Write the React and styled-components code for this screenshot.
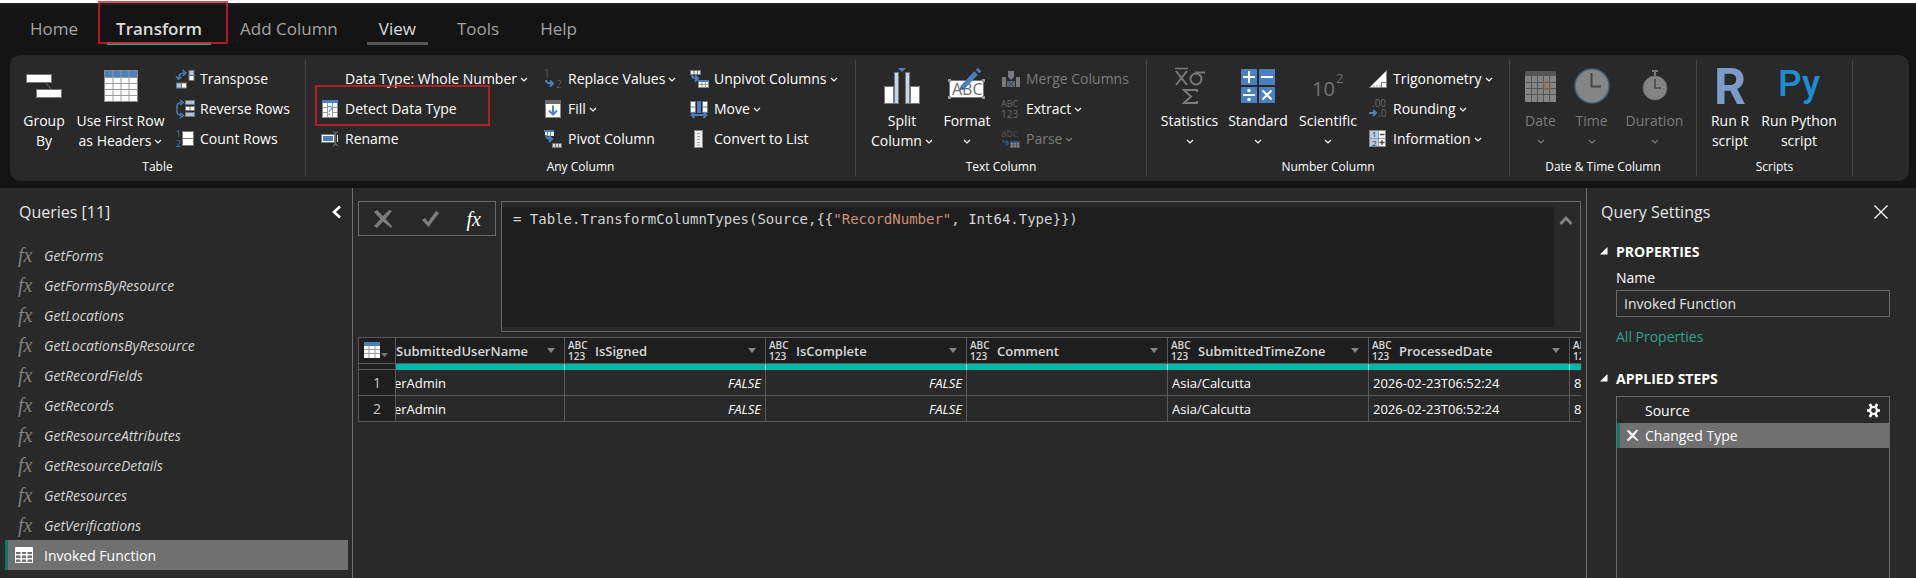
//react
import { useState } from "react";

//styled-components
import styled, { createGlobalStyle } from "styled-components";

const GlobalStyle = createGlobalStyle`
  * {
    box-sizing: border-box;
  }
  body {
    margin: 0;
    background-color: #141414;
    color: #ffffff;
    font-family: "Open Sans", "Noto Sans", sans-serif;
    font-size: 14px;
  }
  button, input {
    font: inherit;
    color: inherit;
  }
  button {
    background: none;
    border: none;
    padding: 0;
    cursor: pointer;
  }
  svg {
    flex: none;
    overflow: visible;
  }
`;

//layout
const Container = styled.div`
  display: flex;
  flex-direction: column;
  min-height: 100vh;
  border-top: 3px solid #ffffff;
`;

const Tabs = styled.nav`
  display: flex;
  gap: 17px;
  padding: 0 18px 10px;
  border-top: 2px solid #222222;
`;

const Tab = styled.button`
  position: relative;
  height: 40px;
  padding: ${(props) => (props.$active ? "10px 9px 0" : "10px 12px 0")};
  border-bottom: 3px solid ${(props) => props.$line || "transparent"};
  font-size: 17px;
  font-weight: ${(props) => (props.$active ? "600" : "400")};
  color: ${(props) => (props.$line ? "#dcdcdc" : "#a3a3a3")};
`;

//red frames over the tab and the detect button
const Frame = styled.span`
  position: absolute;
  border: 2px solid rgba(214, 30, 34, 0.8);
  pointer-events: none;
`;

const TabFrame = styled(Frame)`
  inset: -4px -17px -2px -9px;
`;

const ButtonFrame = styled(Frame)`
  inset: -14px -33px -7px -5px;
`;

const Ribbon = styled.div`
  display: flex;
  margin: 0 7px 7px 10px;
  padding: 5px 0;
  border-radius: 10px;
  background-color: #292929;
`;

const Group = styled.section`
  display: flex;
  flex-direction: column;
  flex: 0 0 ${(props) => props.$width};
  padding-top: 4px;
  border-right: 1px solid #444444;
`;

const GroupBody = styled.div`
  display: flex;
  height: 90px;
  padding-left: ${(props) => props.$left || "6px"};
`;

const GroupTitle = styled.div`
  padding-top: 4px;
  line-height: 18px;
  font-size: 12px;
  text-align: center;
`;

const LargeButton = styled.button`
  display: flex;
  flex-direction: column;
  align-items: center;
  flex: 0 0 ${(props) => props.$width};
  line-height: 20px;
  white-space: nowrap;
  color: ${(props) => (props.disabled ? "#7c7c7c" : "#ffffff")};
`;

const LargeIcon = styled.span`
  display: flex;
  align-items: center;
  height: 44px;
  margin-bottom: 3px;
`;

const Line = styled.span`
  display: flex;
  align-items: center;
  gap: 3px;
  height: 20px;
`;

const SmallColumn = styled.div`
  display: flex;
  flex-direction: column;
  align-items: flex-start;
  margin-left: ${(props) => props.$left || "0"};
  width: ${(props) => props.$width || "auto"};
`;

const SmallButton = styled.button`
  position: relative;
  display: flex;
  align-items: center;
  gap: 5px;
  height: 20px;
  margin: 5px 0;
  line-height: 20px;
  white-space: nowrap;
  color: ${(props) => (props.disabled ? "#7c7c7c" : "#ffffff")};
`;

const SmallIcon = styled.span`
  display: flex;
  width: 20px;
  height: 20px;
`;

const Body = styled.div`
  display: flex;
  flex: 1;
  background-color: #292929;
`;

//queries
const Queries = styled.aside`
  flex: 0 0 353px;
  border-right: 1px solid #6f6f6f;
`;

const PanelTop = styled.div`
  display: flex;
  align-items: center;
  justify-content: space-between;
  height: 48px;
  padding: ${(props) => props.$padding};
`;

const PanelTitle = styled.h2`
  margin: 0;
  font-size: 16px;
  font-weight: 400;
  color: #e6e6e6;
`;

const IconButton = styled.button`
  display: flex;
`;

const QueryList = styled.ul`
  margin: 0;
  padding: 4px 4px 0 5px;
  list-style: none;
`;

const Query = styled.button`
  display: flex;
  align-items: center;
  width: 100%;
  height: 30px;
  border-left: 3px solid ${(props) => (props.$selected ? "#117865" : "transparent")};
  background-color: ${(props) => (props.$selected ? "#707070" : "transparent")};
  color: ${(props) => (props.$selected ? "#ffffff" : "#d6d6d6")};
  font-style: ${(props) => (props.$selected ? "normal" : "italic")};
`;

const QueryIcon = styled.span`
  display: flex;
  flex: 0 0 36px;
  padding-left: ${(props) => (props.$selected ? "6px" : "10px")};
`;

const Fx = styled.span`
  font-family: "Liberation Serif", serif;
  font-style: italic;
  font-size: 20px;
  line-height: 20px;
  color: ${(props) => props.$color || "#808080"};
`;

//center
const Center = styled.main`
  flex: 1;
  min-width: 0;
  padding: 13px 5px 0;
`;

const FormulaRow = styled.div`
  display: flex;
  align-items: flex-start;
  gap: 5px;
`;

const FormulaButtons = styled.div`
  display: flex;
  align-items: center;
  justify-content: space-between;
  width: 138px;
  height: 35px;
  padding: 0 14px;
  border: 1px solid #6a6a6a;
`;

const FormulaBox = styled.div`
  display: flex;
  flex: 1;
  align-items: flex-start;
  height: 131px;
  padding: 5px 0 4px;
  border: 1px solid #6a6a6a;
`;

const Formula = styled.div`
  flex: 1;
  align-self: stretch;
  padding: 2px 11px;
  background-color: #1e1e1e;
  color: #d4d4d4;
  font-family: "DejaVu Sans Mono", "Liberation Mono", monospace;
  font-size: 14px;
  line-height: 20px;
`;

const FormulaString = styled.span`
  color: #ce9178;
`;

const FormulaToggle = styled(IconButton)`
  padding: 7px 7px 0 5px;
`;

const Grid = styled.div`
  margin-top: 5px;
  overflow: hidden;
`;

const Table = styled.table`
  width: 1413px;
  table-layout: fixed;
  border-collapse: separate;
  border-spacing: 0;
  border-left: 1px solid #5a5a5a;
  font-size: 13px;
`;

const HeadCell = styled.th`
  height: 27px;
  padding: 0;
  overflow: hidden;
  border-top: 1px solid #5a5a5a;
  border-right: 1px solid #5a5a5a;
  border-bottom: 1px solid #5a5a5a;
  background-color: #1e1e1e;
  color: #d8d8d8;
  font-weight: 600;
`;

const HeadContent = styled.div`
  display: flex;
  align-items: center;
  justify-content: space-between;
  gap: 7px;
  padding: ${(props) => (props.$clipped ? "0 8px 0 0" : "0 8px 0 3px")};
`;

const HeadName = styled.span`
  flex: 1;
  text-align: left;
`;

const TypeTag = styled.span`
  flex: 0 0 20px;
  font-size: 10px;
  line-height: 11px;
  text-align: left;
`;

const QualityCell = styled.td`
  height: 6px;
  padding: 0;
  border-right: 1px solid ${(props) => (props.$empty ? "#5a5a5a" : "#8fd8d2")};
  border-bottom: ${(props) => (props.$empty ? "1px solid #5a5a5a" : "none")};
  background-color: ${(props) => (props.$empty ? "#1e1e1e" : "#01b8aa")};
`;

const Cell = styled.td`
  height: 26px;
  padding: ${(props) => (props.$clipped ? "0" : "0 4px")};
  border-right: 1px solid #5a5a5a;
  border-bottom: 1px solid #5a5a5a;
  overflow: hidden;
  white-space: nowrap;
  text-align: ${(props) => (props.$logical ? "right" : "left")};
  text-indent: ${(props) => (props.$clipped ? "-2px" : "0")};
  font-style: ${(props) => (props.$logical ? "italic" : "normal")};
`;

const RowNumber = styled.th`
  padding: 0;
  border-right: 1px solid #5a5a5a;
  border-bottom: 1px solid #5a5a5a;
  background-color: #1e1e1e;
  color: #c8c8c8;
  font-size: 14px;
  font-weight: 400;
`;

//settings
const Settings = styled.aside`
  display: flex;
  flex-direction: column;
  flex: 0 0 330px;
  border-left: 1px solid #6f6f6f;
`;

const SectionTitle = styled.h3`
  display: flex;
  align-items: center;
  gap: 8px;
  height: 24px;
  margin: ${(props) => props.$margin || "0"};
  padding-left: 13px;
  font-size: 14px;
  font-weight: 700;
`;

const Fields = styled.div`
  display: flex;
  flex-direction: column;
  padding: 3px 26px 0 29px;
`;

const Label = styled.label`
  line-height: 24px;
`;

const Input = styled.input`
  height: 27px;
  padding: 0 7px;
  border: 1px solid #6a6a6a;
  background-color: transparent;
  color: #e6e6e6;
`;

const Link = styled.a`
  margin-top: 8px;
  line-height: 24px;
  color: #2ba58a;
  text-decoration: none;
`;

const Steps = styled.ul`
  flex: 1;
  margin: 6px 26px 0 29px;
  padding: 1px 0 0;
  border: 1px solid #6a6a6a;
  border-bottom: none;
  list-style: none;
`;

const Step = styled.li`
  display: flex;
  align-items: center;
  justify-content: space-between;
  height: 25px;
  padding-right: 8px;
  border-left: 3px solid ${(props) => (props.$selected ? "#117865" : "transparent")};
  background-color: ${(props) => (props.$selected ? "#707070" : "transparent")};
`;

const StepName = styled.button`
  display: flex;
  align-items: center;
`;

const StepIcon = styled.span`
  display: flex;
  flex: 0 0 25px;
  padding-left: 6px;
`;

//icons
const Svg = ({ w = 20, h = 20, children }) => (
  <svg width={w} height={h} viewBox={`0 0 ${w} ${h}`} fill="none" aria-hidden="true">
    {children}
  </svg>
);

const Chevron = () => (
  <Svg w={8} h={6}>
    <path d="M1 2 L4 5 L7 2" stroke="currentColor" strokeWidth="1.2" />
  </Svg>
);

const BLUE = "#4a80bd";

const GroupIcon = () => (
  <Svg w={36} h={26}>
    <path d="M19 9 L25 16" stroke="#6a6a6a" />
    <rect x="0.5" y="1.5" width="25" height="8" fill="#fff" stroke="#777" />
    <rect x="10.5" y="16.5" width="25" height="8" fill="#fff" stroke="#777" />
  </Svg>
);

const HeadersIcon = () => (
  <Svg w={34} h={32}>
    <rect x="0.5" y="0.5" width="33" height="31" fill="#fff" stroke="#8a8a8a" />
    <rect x="1" y="1" width="32" height="6" fill={BLUE} />
    <path d="M1 7.5H33M1 13.5H33M1 19.5H33M1 25.5H33M9 1V31M17 1V31M25 1V31" stroke="#9b9b9b" />
  </Svg>
);

const TransposeIcon = () => (
  <Svg>
    <path d="M3.5 9.5 Q4 4 9 4" stroke={BLUE} strokeWidth="1.6" />
    <path d="M7.5 1 L11 4 L7.5 7 M1 7.5 L3.5 10.5 L6.5 8" stroke={BLUE} strokeWidth="1.5" />
    <rect x="14" y="1.5" width="5" height="5" fill="#a9c3e2" stroke="#777" />
    <rect x="14" y="6.5" width="5" height="5" fill="#fff" stroke="#777" />
    <rect x="1.5" y="14" width="5" height="5" fill="#a9c3e2" stroke="#777" />
    <rect x="6.5" y="14" width="5" height="5" fill="#fff" stroke="#777" />
  </Svg>
);

const ReverseIcon = () => (
  <Svg>
    <path d="M6.5 3.5 Q2 4 2 7 V13 Q2 16 6.5 16.5" stroke={BLUE} strokeWidth="1.4" />
    <path d="M5 1 L8.5 3.5 L5 6 M5 14 L8.5 16.5 L5 19" stroke={BLUE} strokeWidth="1.4" />
    <rect x="10.5" y="1.5" width="9" height="4" fill="#a9c3e2" stroke="#777" />
    <rect x="10.5" y="7.5" width="9" height="4" fill="#fff" stroke="#777" />
    <rect x="10.5" y="13.5" width="9" height="4" fill="#a9c3e2" stroke="#777" />
    <path d="M15 7.5V11.5" stroke="#777" />
  </Svg>
);

const CountIcon = () => (
  <Svg>
    <text x="1" y="8" fontSize="9" fill={BLUE}>1</text>
    <text x="1" y="18" fontSize="9" fill={BLUE}>2</text>
    <rect x="7.5" y="2.5" width="11" height="7" fill="#fff" stroke="#777" />
    <rect x="7.5" y="9.5" width="11" height="7" fill="#fff" stroke="#777" />
  </Svg>
);

const DetectIcon = () => (
  <Svg>
    <rect x="2.5" y="1.5" width="15" height="17" fill="#fff" stroke="#8a8a8a" />
    <rect x="2" y="1" width="16" height="3" fill={BLUE} />
    <path d="M2.5 8.5H17.5M2.5 13.5H17.5M7.5 4V18.5M12.5 4V18.5" stroke="#9b9b9b" />
    <rect x="8" y="6" width="4" height="11" fill="#fff" />
    <text x="7" y="16" fontSize="12" fill={BLUE}>?</text>
  </Svg>
);

const RenameIcon = () => (
  <Svg>
    <rect x="1.5" y="5.5" width="13" height="8" fill="#fff" stroke="#777" />
    <rect x="3" y="7" width="10" height="5" fill={BLUE} />
    <path d="M13 2.5 L15.5 4 L18 2.5 M15.5 4 V15 M13 17 L15.5 15 L18 17" stroke="#666" strokeWidth="1.4" />
    <path d="M17.5 6 V13" stroke="#ddd" />
  </Svg>
);

const ReplaceIcon = () => (
  <Svg>
    <text x="1" y="8" fontSize="10" fill="#5c5c5c">1</text>
    <text x="13" y="19" fontSize="10" fill="#5c5c5c">2</text>
    <path d="M3 11 Q3 14.5 9 14.5 M7 11.5 L10 14.5 L7 17.5" stroke={BLUE} strokeWidth="2" />
  </Svg>
);

const FillIcon = () => (
  <Svg>
    <rect x="2.5" y="1.5" width="15" height="17" fill="#fff" stroke="#888" />
    <rect x="2" y="1" width="16" height="4" fill="#6a6a6a" />
    <path d="M10 6.5 V15 M6 11.5 L10 15.5 L14 11.5" stroke={BLUE} strokeWidth="2" />
  </Svg>
);

const PivotIcon = () => (
  <Svg>
    <rect x="1" y="1" width="10" height="2" fill={BLUE} />
    <rect x="2" y="3" width="9" height="4" fill="#eee" />
    <path d="M4.5 3V7M7.5 3V7" stroke="#888" />
    <path d="M3 6 Q3 10 8 10 M6 7 L9 10 L6 13" stroke={BLUE} strokeWidth="2" />
    <rect x="9.5" y="14.5" width="9" height="4" fill="#ddd" stroke="#777" />
    <path d="M12.5 14V19M15.5 14V19" stroke="#777" />
  </Svg>
);

const UnpivotIcon = () => (
  <Svg>
    <rect x="1.5" y="1.5" width="10" height="4" fill="#eee" stroke="#777" />
    <path d="M5 1V6M8.5 1V6" stroke="#777" />
    <path d="M3 6 Q3 9.5 8 9.5 M6 6.5 L9 9.5 L6 12.5" stroke={BLUE} strokeWidth="2" />
    <rect x="9.5" y="11.5" width="10" height="7" fill="#fff" stroke="#888" />
    <rect x="9" y="11" width="11" height="2" fill={BLUE} />
    <path d="M9 15.5H20M13 13V19M16.5 13V19" stroke="#999" />
  </Svg>
);

const MoveIcon = () => (
  <Svg>
    <rect x="1.5" y="2.5" width="5" height="11" fill="#fff" stroke="#777" />
    <rect x="13.5" y="2.5" width="5" height="11" fill="#fff" stroke="#777" />
    <path d="M1 8H7M13 8H19" stroke="#777" />
    <rect x="8" y="2" width="4" height="12" fill={BLUE} />
    <path d="M3 16 H17 M5.5 13 L2.5 16 L5.5 19 M14.5 13 L17.5 16 L14.5 19" stroke={BLUE} strokeWidth="1.8" />
  </Svg>
);

const ListIcon = () => (
  <Svg>
    <rect x="5.5" y="1.5" width="8" height="17" fill="#eee" stroke="#888" />
    <path d="M8 4.5H11M8 7.5H11M8 10.5H11M8 13.5H11M8 16H11" stroke="#aaa" />
  </Svg>
);

const SplitIcon = () => (
  <Svg w={38} h={38}>
    <path d="M15 1 H23 L19 5 Z" fill={BLUE} />
    <rect x="1.5" y="19.5" width="9" height="17" fill="#fff" stroke="#777" />
    <rect x="27.5" y="19.5" width="9" height="17" fill="#fff" stroke="#777" />
    <rect x="11.5" y="5.5" width="4" height="31" fill="#c3d5ec" stroke="#777" />
    <rect x="22.5" y="5.5" width="4" height="31" fill="#c3d5ec" stroke="#777" />
  </Svg>
);

const FormatIcon = () => (
  <Svg w={38} h={38}>
    <rect x="1.5" y="13.5" width="34" height="17" fill="#fff" stroke="#777" />
    <path d="M0 12H3V15H0ZM34 12H37V15H34ZM0 29H3V32H0ZM34 29H37V32H34Z" fill="#999" />
    <text x="4" y="28" fontSize="16" fill="#6d6d6d">ABC</text>
    <path d="M15 20 L28 6" stroke={BLUE} strokeWidth="5" />
    <path d="M29.5 4.5 L31.5 2.5" stroke={BLUE} strokeWidth="5" />
    <path d="M13 18 L17 22 L11.5 23.5 Z" fill="#3767a0" />
  </Svg>
);

const MergeIcon = () => (
  <Svg>
    <rect x="1" y="8" width="4" height="10" fill="#7a7a7a" />
    <rect x="15" y="8" width="4" height="10" fill="#7a7a7a" />
    <path d="M7 2H13V8L10 11L7 8Z" fill="#777b80" />
    <rect x="6" y="12" width="8" height="6" fill="#62686f" />
    <path d="M7 12L10 15L7 18M13 12L10 15L13 18" stroke="#2d4d72" />
  </Svg>
);

const ExtractIcon = () => (
  <Svg>
    <text x="0" y="8" fontSize="9" fill="#6a6a6a">ABC</text>
    <text x="0" y="19" fontSize="10" fill="#6a6a6a">123</text>
  </Svg>
);

const ParseIcon = () => (
  <Svg>
    <text x="0" y="8" fontSize="10" fill="#525252">abc</text>
    <path d="M2 11 Q2 14 7 14 M5 11.5 L7.5 14 L5 16.5" stroke="#2f5580" strokeWidth="1.6" />
    <rect x="9.5" y="12.5" width="9" height="6" fill="#8a8a8a" stroke="#555" />
    <rect x="9" y="12" width="10" height="2" fill="#2f5580" />
    <path d="M12.5 13V19M15.5 13V19M9 16H19" stroke="#555" />
  </Svg>
);

const StatisticsIcon = () => (
  <Svg w={34} h={38}>
    <path d="M2 1.5H15" stroke="#7a7a7a" strokeWidth="1.5" />
    <path d="M3 4L14 18M14 4L3 18" stroke="#7a7a7a" strokeWidth="2" />
    <circle cx="23" cy="12" r="5.500" stroke="#7a7a7a" strokeWidth="2" />
    <path d="M22 5.500H32" stroke="#7a7a7a" strokeWidth="2" />
    <path d="M24 25V23H11L18 29.500L11 36H24V34" stroke="#7a7a7a" strokeWidth="2" />
  </Svg>
);

const StandardIcon = () => (
  <Svg w={36} h={36}>
    <path d="M1 1H17V17H1ZM19 1H35V17H19ZM1 19H17V35H1ZM19 19H35V35H19Z" fill={BLUE} />
    <path d="M3 9H15M9 3V15M21 9H33M3 27H15M22.5 22.5L31.5 31.5M31.5 22.5L22.5 31.5" stroke="#fff" strokeWidth="2" />
    <circle cx="9" cy="22.5" r="1.7" fill="#fff" />
    <circle cx="9" cy="31.5" r="1.7" fill="#fff" />
  </Svg>
);

const ScientificIcon = () => (
  <Svg w={34} h={38}>
    <text x="1" y="29" fontSize="20" fill="#737373">10</text>
    <text x="25" y="16" fontSize="13" fill="#737373">2</text>
  </Svg>
);

const TrigIcon = () => (
  <Svg>
    <path d="M1.5 18.5 L18.5 1.5 V18.5 Z" fill="#fff" stroke="#888" />
    <path d="M13.5 18.5V13.5H18.5" stroke="#777" />
    <path d="M6 18V16M9 18V16M12 18V16" stroke="#999" />
  </Svg>
);

const RoundingIcon = () => (
  <Svg>
    <text x="4" y="8" fontSize="10" fill="#6a6a6a">.00</text>
    <text x="10" y="18" fontSize="10" fill="#6a6a6a">.0</text>
    <path d="M1 14H7M5 11L8 14L5 17" stroke={BLUE} strokeWidth="2" />
  </Svg>
);

const InformationIcon = () => (
  <Svg>
    <rect x="1.5" y="1.5" width="16" height="16" fill="#fff" stroke="#888" />
    <rect x="2" y="2" width="8" height="15" fill="#b5cbe6" />
    <path d="M2 9.5H17M10.5 2V17" stroke="#999" />
    <text x="4" y="8" fontSize="8" fill="#333">1</text>
    <text x="4" y="17" fontSize="8" fill="#333">2</text>
    <path d="M12 5.5H16.5M11.5 13.5H16.5M14 11V16" stroke="#444" strokeWidth="1.3" />
  </Svg>
);

const DateIcon = () => (
  <Svg w={34} h={34}>
    <rect x="1" y="2" width="31" height="31" fill="#858585" />
    <rect x="1" y="2" width="31" height="5" fill="#555" />
    <path d="M2 13.5H32M2 19.5H32M2 25.5H32M7.5 7V33M13.5 7V33M19.5 7V33M25.5 7V33" stroke="#555" />
    <rect x="20" y="13" width="6" height="7" stroke="#9a6240" />
  </Svg>
);

const TimeIcon = () => (
  <Svg w={38} h={38}>
    <circle cx="19" cy="19" r="17" fill="#858585" stroke="#47617c" strokeWidth="1.5" />
    <path d="M18.5 6V19.5H28" stroke="#454545" strokeWidth="2" />
  </Svg>
);

const DurationIcon = () => (
  <Svg w={28} h={32}>
    <rect x="11" y="0" width="6" height="2" fill="#777" />
    <path d="M14 1V6" stroke="#777" strokeWidth="2" />
    <circle cx="14" cy="18" r="12" fill="#858585" stroke="#666" />
    <circle cx="14" cy="18" r="9" stroke="#555" strokeDasharray="1 3.7" />
    <path d="M14 9V18H20" stroke="#454545" strokeWidth="1.5" />
  </Svg>
);

const RIcon = () => (
  <Svg w={32} h={44}>
    <text x="0" y="40" fontSize="50" fontWeight="700" fontFamily="Roboto" fill="#7b9cc9">R</text>
  </Svg>
);

const PythonIcon = () => (
  <Svg w={42} h={44}>
    <text x="0" y="32" fontSize="37" fontWeight="500" fontFamily="Roboto" fill="#1f8dd2">Py</text>
  </Svg>
);

const TableIcon = () => (
  <Svg w={20} h={18}>
    <rect x="1" y="1" width="18" height="16" fill="#fff" />
    <path d="M2 6H6.5V8H2ZM8 6H12V8H8ZM13.5 6H18V8H13.5ZM2 9.5H6.5V12H2ZM8 9.5H12V12H8ZM13.5 9.5H18V12H13.5ZM2 13.5H6.5V16H2ZM8 13.5H12V16H8ZM13.5 13.5H18V16H13.5Z" fill="#707070" />
  </Svg>
);

const CornerIcon = () => (
  <Svg w={26} h={18}>
    <rect x="2" y="1" width="16" height="15" fill="#fff" />
    <rect x="2" y="0" width="16" height="4" fill={BLUE} />
    <path d="M2 7.5H18M2 11.5H18M7 4V16M13 4V16" stroke="#999" />
    <path d="M19 11H26L22.5 15Z" fill="#777" />
  </Svg>
);

const DropIcon = () => (
  <Svg w={10} h={5}>
    <path d="M1 0H9L5 5Z" fill="#858585" />
  </Svg>
);

const CrossIcon = ({ size, color }) => (
  <svg width={size} height={size} viewBox="0 0 20 20" fill={color} aria-hidden="true">
    <path d="M1 3 L4 1 L10 7 L16 1 L19 2 L12.5 10 L19 17 L18 19 L10 12.5 L4 19 L1 17 L7.5 10 Z" />
  </svg>
);

const CheckIcon = () => (
  <Svg w={18} h={18}>
    <path d="M1 10 L4 8 L7 12 L15 1 L18 3 L7.5 17 Z" fill="#7c7c7c" />
  </Svg>
);

const GearIcon = () => (
  <Svg w={15} h={15}>
    <circle cx="7.5" cy="7.5" r="3.5" stroke="#fff" strokeWidth="2.2" />
    <path d="M1 7.5H4M11 7.5H14M3.800 1L5.500 4M9.500 11L11.200 14M3.800 14L5.500 11M9.500 4L11.200 1" stroke="#fff" strokeWidth="2.6" />
  </Svg>
);

const Triangle = () => (
  <Svg w={8} h={8}>
    <path d="M0 7.5 L7.5 0 V7.5 Z" fill="#fff" />
  </Svg>
);

const Small = ({ icon, text, menu, children, ...rest }) => (
  <SmallButton {...rest}>
    <SmallIcon>{icon}</SmallIcon>
    <Line>
      {text}
      {menu && <Chevron />}
    </Line>
    {children}
  </SmallButton>
);

const Large = ({ icon, text, second, menu, width, disabled }) => (
  <LargeButton $width={width} disabled={disabled}>
    <LargeIcon>{icon}</LargeIcon>
    <Line>{text}</Line>
    <Line>
      {second}
      {menu && <Chevron />}
    </Line>
  </LargeButton>
);

const queries = [
  "GetForms",
  "GetFormsByResource",
  "GetLocations",
  "GetLocationsByResource",
  "GetRecordFields",
  "GetRecords",
  "GetResourceAttributes",
  "GetResourceDetails",
  "GetResources",
  "GetVerifications",
  "Invoked Function",
];

const columns = ["IsSigned", "IsComplete", "Comment", "SubmittedTimeZone", "ProcessedDate", ""];

const rows = [1, 2];

const App = () => {
  const [selected, setSelected] = useState("Invoked Function");
  const [name, setName] = useState("Invoked Function");

  return (
    <Container>
      <GlobalStyle />
      <Tabs>
        <Tab>Home</Tab>
        <Tab $active $line="#2ba58a">
          Transform
          <TabFrame />
        </Tab>
        <Tab>Add Column</Tab>
        <Tab $line="#555555">View</Tab>
        <Tab>Tools</Tab>
        <Tab>Help</Tab>
      </Tabs>

      <Ribbon>
        <Group $width="296px">
          <GroupBody>
            <Large width="56px" icon={<GroupIcon />} text="Group" second="By" />
            <Large width="97px" icon={<HeadersIcon />} text="Use First Row" second="as Headers" menu />
            <SmallColumn $left="6px">
              <Small icon={<TransposeIcon />} text="Transpose" />
              <Small icon={<ReverseIcon />} text="Reverse Rows" />
              <Small icon={<CountIcon />} text="Count Rows" />
            </SmallColumn>
          </GroupBody>
          <GroupTitle>Table</GroupTitle>
        </Group>

        <Group $width="550px">
          <GroupBody $left="14px">
            <SmallColumn $width="223px">
              <Small text="Data Type: Whole Number" menu />
              <Small icon={<DetectIcon />} text="Detect Data Type">
                <ButtonFrame />
              </Small>
              <Small icon={<RenameIcon />} text="Rename" />
            </SmallColumn>
            <SmallColumn $width="146px">
              <Small icon={<ReplaceIcon />} text="Replace Values" menu />
              <Small icon={<FillIcon />} text="Fill" menu />
              <Small icon={<PivotIcon />} text="Pivot Column" />
            </SmallColumn>
            <SmallColumn>
              <Small icon={<UnpivotIcon />} text="Unpivot Columns" menu />
              <Small icon={<MoveIcon />} text="Move" menu />
              <Small icon={<ListIcon />} text="Convert to List" />
            </SmallColumn>
          </GroupBody>
          <GroupTitle>Any Column</GroupTitle>
        </Group>

        <Group $width="291px">
          <GroupBody>
            <Large width="80px" icon={<SplitIcon />} text="Split" second="Column" menu />
            <Large width="50px" icon={<FormatIcon />} text="Format" menu />
            <SmallColumn $left="9px">
              <Small icon={<MergeIcon />} text="Merge Columns" disabled />
              <Small icon={<ExtractIcon />} text="Extract" menu />
              <Small icon={<ParseIcon />} text="Parse" menu disabled />
            </SmallColumn>
          </GroupBody>
          <GroupTitle>Text Column</GroupTitle>
        </Group>

        <Group $width="363px">
          <GroupBody $left="8px">
            <Large width="69px" icon={<StatisticsIcon />} text="Statistics" menu />
            <Large width="68px" icon={<StandardIcon />} text="Standard" menu />
            <Large width="72px" icon={<ScientificIcon />} text="Scientific" menu />
            <SmallColumn $left="4px">
              <Small icon={<TrigIcon />} text="Trigonometry" menu />
              <Small icon={<RoundingIcon />} text="Rounding" menu />
              <Small icon={<InformationIcon />} text="Information" menu />
            </SmallColumn>
          </GroupBody>
          <GroupTitle>Number Column</GroupTitle>
        </Group>

        <Group $width="187px">
          <GroupBody>
            <Large width="49px" icon={<DateIcon />} text="Date" menu disabled />
            <Large width="53px" icon={<TimeIcon />} text="Time" menu disabled />
            <Large width="73px" icon={<DurationIcon />} text="Duration" menu disabled />
          </GroupBody>
          <GroupTitle>Date & Time Column</GroupTitle>
        </Group>

        <Group $width="156px">
          <GroupBody $left="8px">
            <Large width="50px" icon={<RIcon />} text="Run R" second="script" />
            <Large width="88px" icon={<PythonIcon />} text="Run Python" second="script" />
          </GroupBody>
          <GroupTitle>Scripts</GroupTitle>
        </Group>
      </Ribbon>

      <Body>
        <Queries>
          <PanelTop $padding="0 10px 0 19px">
            <PanelTitle>Queries [11]</PanelTitle>
            <IconButton aria-label="Collapse">
              <Svg w={11} h={14}>
                <path d="M9 1.5 L3 7 L9 12.5" stroke="#fff" strokeWidth="2.6" />
              </Svg>
            </IconButton>
          </PanelTop>
          <QueryList>
            {queries.map((query) => (
              <li key={query}>
                <Query $selected={query === selected} onClick={() => setSelected(query)}>
                  <QueryIcon $selected={query === "Invoked Function"}>
                    {query === "Invoked Function" ? <TableIcon /> : <Fx>fx</Fx>}
                  </QueryIcon>
                  {query}
                </Query>
              </li>
            ))}
          </QueryList>
        </Queries>

        <Center>
          <FormulaRow>
            <FormulaButtons>
              <IconButton aria-label="Cancel">
                <CrossIcon size={20} color="#7c7c7c" />
              </IconButton>
              <IconButton aria-label="Commit">
                <CheckIcon />
              </IconButton>
              <IconButton>
                <Fx $color="#ffffff">fx</Fx>
              </IconButton>
            </FormulaButtons>
            <FormulaBox>
              <Formula role="textbox" aria-label="Formula" contentEditable suppressContentEditableWarning spellCheck={false}>
                = Table.TransformColumnTypes(Source,{"{{"}
                <FormulaString>"RecordNumber"</FormulaString>, Int64.Type{"}})"}
              </Formula>
              <FormulaToggle aria-label="Collapse formula">
                <Svg w={14} h={12}>
                  <path d="M1.5 10 L7 4 L12.5 10" stroke="#858585" strokeWidth="2.8" />
                </Svg>
              </FormulaToggle>
            </FormulaBox>
          </FormulaRow>

          <Grid>
            <Table>
              <colgroup>
                <col width="37" />
                <col width="169" />
                {columns.map((column) => (
                  <col key={column} width="201" />
                ))}
              </colgroup>
              <thead>
                <tr>
                  <HeadCell>
                    <IconButton aria-label="Table menu">
                      <HeadContent>
                        <CornerIcon />
                      </HeadContent>
                    </IconButton>
                  </HeadCell>
                  <HeadCell>
                    <HeadContent $clipped>
                      <HeadName>SubmittedUserName</HeadName>
                      <DropIcon />
                    </HeadContent>
                  </HeadCell>
                  {columns.map((column) => (
                    <HeadCell key={column}>
                      <HeadContent>
                        <TypeTag>ABC 123</TypeTag>
                        <HeadName>{column}</HeadName>
                        <DropIcon />
                      </HeadContent>
                    </HeadCell>
                  ))}
                </tr>
              </thead>
              <tbody>
                <tr>
                  <QualityCell $empty />
                  <QualityCell />
                  {columns.map((column) => (
                    <QualityCell key={column} />
                  ))}
                </tr>
                {rows.map((row) => (
                  <tr key={row}>
                    <RowNumber>{row}</RowNumber>
                    <Cell $clipped>erAdmin</Cell>
                    <Cell $logical>FALSE</Cell>
                    <Cell $logical>FALSE</Cell>
                    <Cell />
                    <Cell>Asia/Calcutta</Cell>
                    <Cell>2026-02-23T06:52:24</Cell>
                    <Cell>8</Cell>
                  </tr>
                ))}
              </tbody>
            </Table>
          </Grid>
        </Center>

        <Settings>
          <PanelTop $padding="0 27px 0 14px">
            <PanelTitle>Query Settings</PanelTitle>
            <IconButton aria-label="Close">
              <Svg w={16} h={16}>
                <path d="M1.5 1.5L14.5 14.5M14.5 1.5L1.5 14.5" stroke="#fff" strokeWidth="1.3" />
              </Svg>
            </IconButton>
          </PanelTop>
          <SectionTitle $margin="3px 0 0">
            <Triangle />
            PROPERTIES
          </SectionTitle>
          <Fields>
            <Label htmlFor="name">Name</Label>
            <Input id="name" value={name} onChange={(e) => setName(e.target.value)} />
            <Link href="#properties">All Properties</Link>
          </Fields>
          <SectionTitle $margin="17px 0 0">
            <Triangle />
            APPLIED STEPS
          </SectionTitle>
          <Steps>
            <Step>
              <StepName>
                <StepIcon />
                Source
              </StepName>
              <IconButton aria-label="Edit step">
                <GearIcon />
              </IconButton>
            </Step>
            <Step $selected>
              <StepName>
                <StepIcon>
                  <CrossIcon size={13} color="#f0f0f0" />
                </StepIcon>
                Changed Type
              </StepName>
            </Step>
          </Steps>
        </Settings>
      </Body>
    </Container>
  );
};

export default App;
